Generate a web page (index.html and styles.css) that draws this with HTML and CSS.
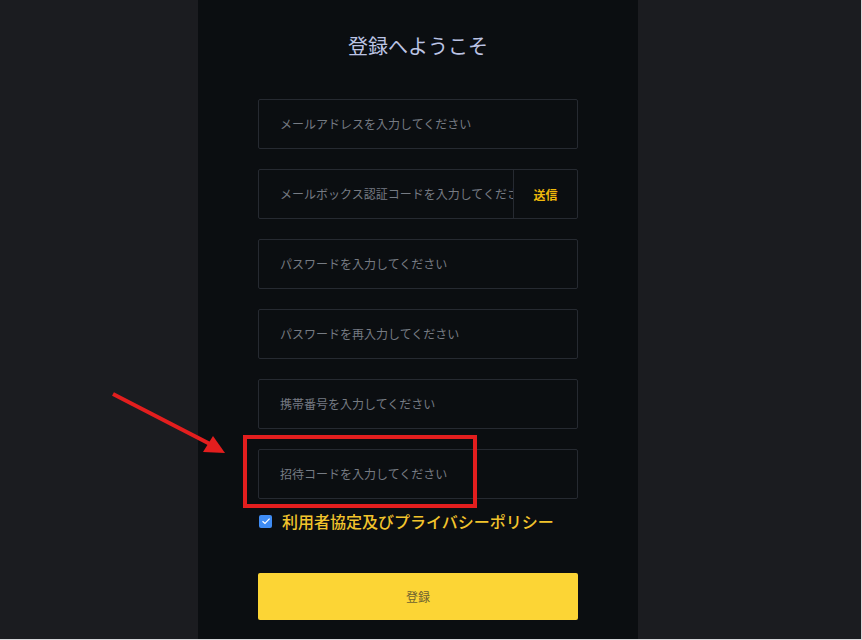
FILE: index.html
```html
<!DOCTYPE html>
<html lang="ja">
<head>
  <meta charset="UTF-8">
  <meta name="viewport" content="width=device-width, initial-scale=1.0">
  <title>登録</title>
  <link rel="stylesheet" href="styles.css">
</head>
<body>
  <div class="page">
    <div class="panel">
      <h1 class="title">登録へようこそ</h1>

      <form class="form">
        <div class="field">
          <input type="email" placeholder="メールアドレスを入力してください">
        </div>

        <div class="field">
          <input type="text" placeholder="メールボックス認証コードを入力してください">
          <button type="button" class="btn-send">送信</button>
        </div>

        <div class="field">
          <input type="password" placeholder="パスワードを入力してください">
        </div>

        <div class="field">
          <input type="password" placeholder="パスワードを再入力してください">
        </div>

        <div class="field">
          <input type="tel" placeholder="携帯番号を入力してください">
        </div>

        <div class="field">
          <input type="text" placeholder="招待コードを入力してください">
        </div>

        <label class="agree">
          <span class="check">
            <svg width="10" height="10" viewBox="0 0 10 10"><path d="M1.5 5.2 L4 7.5 L8.6 2.6" fill="none" stroke="#fff" stroke-width="1.2"/></svg>
          </span>
          <span class="agree-text">利用者協定及びプライバシーポリシー</span>
        </label>

        <button type="button" class="btn-submit">登録</button>
      </form>
    </div>

    <!-- marca en rojo sobre el campo de invitación -->
    <svg class="mark" width="861" height="639" viewBox="0 0 861 639">
      <line x1="113" y1="394" x2="210" y2="444" stroke="#e31e1e" stroke-width="4"/>
      <polygon points="213,436 203,452 225,453" fill="#e31e1e"/>
      <rect x="245" y="437" width="230" height="69" fill="none" stroke="#e31e1e" stroke-width="4"/>
    </svg>
  </div>
</body>
</html>
```

FILE: styles.css
```css
body {
  margin: 0;
  background-color: #d9d9dc;
  font-family: "Noto Sans CJK JP", "Noto Sans", sans-serif;
}

.page {
  position: relative;
  width: 861px;
  height: 639px;
  background-color: #1b1c20;
  overflow: hidden;
}

.panel {
  width: 440px;
  height: 100%;
  margin-left: 198px;
  background-color: #0b0e11;
  padding: 30px 60px 0;
  box-sizing: border-box;
}

.title {
  margin: 0 0 37px;
  font-size: 20px;
  line-height: 32px;
  font-weight: normal;
  text-align: center;
  color: #bcc4e4;
}

.form {
  display: flex;
  flex-direction: column;
}

.field {
  display: flex;
  height: 50px;
  margin-bottom: 20px;
  border: 1px solid #262a31;
  border-radius: 2px;
  box-sizing: border-box;
}

.field:nth-child(6) {
  margin-bottom: 0;
}

.field input {
  flex: 1;
  min-width: 0;
  border: none;
  outline: none;
  background: transparent;
  padding: 0 0 2px 21px;
  font-family: inherit;
  font-size: 12px;
  color: #d0d3d8;
}

.field input::placeholder {
  color: #767b83;
}

.btn-send {
  width: 64px;
  border: none;
  border-left: 1px solid #262a31;
  background: transparent;
  color: #f0b90b;
  font-family: inherit;
  font-size: 12px;
  font-weight: bold;
  cursor: pointer;
}

.agree {
  display: flex;
  align-items: center;
  height: 24px;
  margin-top: 10px;
}

.check {
  display: flex;
  justify-content: center;
  align-items: center;
  width: 13px;
  height: 13px;
  margin-left: 1px;
  border-radius: 2px;
  background-color: #3f8cf4;
}

.agree-text {
  margin-left: 10px;
  font-size: 16px;
  font-weight: 500;
  color: #f2c42c;
}

.btn-submit {
  height: 47px;
  margin-top: 40px;
  padding-bottom: 2px;
  border: none;
  border-radius: 2px;
  background-color: #fcd535;
  color: #6e6230;
  font-family: inherit;
  font-size: 12px;
  cursor: pointer;
}

.mark {
  position: absolute;
  top: 0;
  left: 0;
  pointer-events: none;
}
```
